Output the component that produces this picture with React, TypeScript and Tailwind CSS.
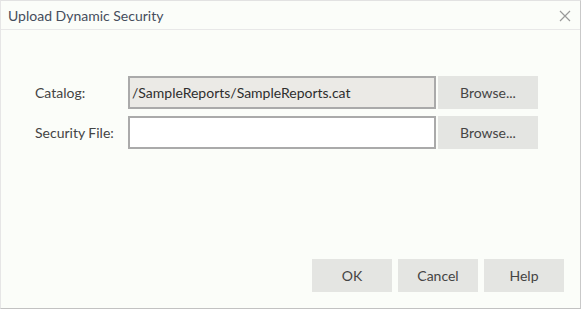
export default function App() {
  return (
    <div className="w-[581px] h-[309px] bg-white" style={{ fontFamily: "Lato, 'Open Sans', sans-serif" }}>
      <div className="w-[581px] h-[309px] flex flex-col bg-[#fbfdf9] border-t border-l border-t-[#e2e2e2] border-l-[#e6e6e6] border-r border-b border-r-[#c9c9c9] border-b-[#c2c2c2]">
        <div className="h-[29px] flex items-center justify-between pl-[7px] pr-[9px] border-b border-[#e8e8e8] shrink-0">
          <span className="text-[14px] text-[#454d5c]">Upload Dynamic Security</span>
          <svg width="12" height="12" viewBox="0 0 12 12" className="mt-[1px]">
            <path d="M1 1 L11 11 M11 1 L1 11" stroke="#9a9a9a" strokeWidth="1.2" fill="none" />
          </svg>
        </div>
        <div className="flex-1 flex flex-col">
          <div className="flex flex-col gap-[7px] pt-[46px] pl-[34px]">
            <div className="flex items-center">
              <span className="w-[93px] text-[14px] text-[#444]">Catalog:</span>
              <div className="w-[308px] h-[33px] border-2 border-[#aaaaaa] bg-[#ebeae6] flex items-center pl-[2px] text-[14px] text-[#2e2e2e]">
                /SampleReports/SampleReports.cat
              </div>
              <div className="ml-[2px] w-[100px] h-[33px] bg-[#e4e5e2] flex items-center justify-center text-[14px] text-[#444]">Browse...</div>
            </div>
            <div className="flex items-center">
              <span className="w-[93px] text-[14px] text-[#444]">Security File:</span>
              <div className="w-[308px] h-[33px] border-2 border-[#aaaaaa] bg-white" />
              <div className="ml-[2px] w-[100px] h-[33px] bg-[#e4e5e2] flex items-center justify-center text-[14px] text-[#444]">Browse...</div>
            </div>
          </div>
          <div className="mt-auto mb-[16px] flex justify-end gap-[6px] pr-[16px]">
            <div className="w-[80px] h-[33px] bg-[#e4e5e2] flex items-center justify-center text-[14px] text-[#444]">OK</div>
            <div className="w-[80px] h-[33px] bg-[#e4e5e2] flex items-center justify-center text-[14px] text-[#444]">Cancel</div>
            <div className="w-[80px] h-[33px] bg-[#e4e5e2] flex items-center justify-center text-[14px] text-[#444]">Help</div>
          </div>
        </div>
      </div>
    </div>
  );
}
